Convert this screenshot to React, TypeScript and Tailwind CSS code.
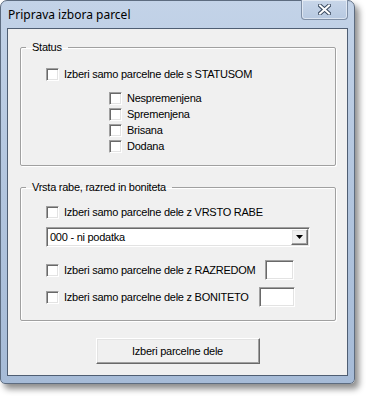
import React from 'react'

const sunken =
  'border border-t-[#a0a0a0] border-l-[#a0a0a0] border-b-white border-r-white shadow-[inset_1px_1px_0_#696969,inset_-1px_-1px_0_#e3e3e3]'
const raised =
  'border border-t-white border-l-white border-b-[#696969] border-r-[#696969] shadow-[inset_-1px_-1px_0_#a0a0a0,inset_1px_1px_0_#e3e3e3]'

function CheckBox() {
  return <div className={`h-[13px] w-[13px] shrink-0 bg-white ${sunken}`} />
}

function CheckRow({ label, className = '' }: { label: string; className?: string }) {
  return (
    <div className={`flex h-[13px] items-center ${className}`}>
      <CheckBox />
      <span className="ml-[5px] whitespace-nowrap leading-[13px]">{label}</span>
    </div>
  )
}

function GroupBox({
  title,
  className = '',
  children,
}: {
  title: string
  className?: string
  children: React.ReactNode
}) {
  return (
    <fieldset
      className={`ml-[12px] w-[316px] rounded-[2px] border border-[#a0a0a0] shadow-[inset_1px_1px_0_white,1px_1px_0_white] ${className}`}
    >
      <legend className="ml-[5px] h-[14px] px-[6px] leading-[14px]">{title}</legend>
      {children}
    </fieldset>
  )
}

function InputRow({ label, labelWidth, boxWidth, className = '' }: {
  label: string
  labelWidth: string
  boxWidth: string
  className?: string
}) {
  return (
    <div className={`flex h-[20px] items-center ${className}`}>
      <CheckBox />
      <span className={`ml-[5px] whitespace-nowrap ${labelWidth}`}>{label}</span>
      <div className={`h-[20px] bg-white ${boxWidth} ${sunken}`} />
    </div>
  )
}

export default function App() {
  return (
    <div
      className="h-[396px] w-[367px] bg-white text-[11px] tracking-[-0.25px] text-black"
      style={{ fontFamily: '"Liberation Sans", Arial, sans-serif' }}
    >
      <div className="flex h-[384px] w-[355px] flex-col rounded-t-[7px] rounded-b-[5px] border border-[#5d6c80] bg-gradient-to-b from-[#c3d3e8] via-[#b2c5de] to-[#a6bbd7] px-[6px] pb-[7px] shadow-[4px_5px_6px_rgba(0,0,0,0.45)]">
        {/* title bar */}
        <div className="flex h-[27px] shrink-0 items-start justify-between">
          <span
            className="ml-[1px] mt-[6px] text-[12px] leading-[16px] tracking-normal text-black"
            style={{ fontFamily: '"Noto Sans", "Open Sans", sans-serif' }}
          >
            Priprava izbora parcel
          </span>
          <div className="-mt-px flex h-[20px] w-[47px] items-center justify-center rounded-b-[4px] border border-t-0 border-[#7f8fa6] bg-gradient-to-b from-[#c8d6e9] to-[#b7c9e1] shadow-[inset_0_0_0_1px_rgba(255,255,255,0.5)]">
            <svg width="13" height="11" viewBox="0 0 13 11">
              <path d="M2 1.5 L11 9.5 M11 1.5 L2 9.5" stroke="#3a4a60" strokeWidth="4" strokeLinecap="square" />
              <path d="M2 1.5 L11 9.5 M11 1.5 L2 9.5" stroke="white" strokeWidth="2" strokeLinecap="square" />
            </svg>
          </div>
        </div>

        {/* client area */}
        <div className="flex flex-1 flex-col border border-[#4f5e73] bg-[#f0f0f0]">
          <GroupBox title="Status" className="mt-[11px]">
            <div className="pl-[25px] pb-[12px]">
              <CheckRow label="Izberi samo parcelne dele s STATUSOM" className="mt-[14px]" />
              <div className="mt-[11px] flex flex-col gap-[3px] pl-[63px]">
                <CheckRow label="Nespremenjena" />
                <CheckRow label="Spremenjena" />
                <CheckRow label="Brisana" />
                <CheckRow label="Dodana" />
              </div>
            </div>
          </GroupBox>

          <GroupBox title="Vrsta rabe, razred in boniteta" className="mt-[14px]">
            <div className="pl-[25px] pb-[13px]">
              <CheckRow label="Izberi samo parcelne dele z VRSTO RABE" className="mt-[12px]" />
              <div className={`mt-[8px] flex h-[20px] w-[264px] items-center bg-white ${sunken}`}>
                <span className="ml-[3px] flex-1">000 - ni podatka</span>
                <div className={`mr-px flex h-[16px] w-[17px] items-center justify-center bg-[#f0f0f0] ${raised}`}>
                  <svg width="7" height="4" viewBox="0 0 7 4">
                    <path d="M0 0 H7 L3.5 4 Z" fill="black" />
                  </svg>
                </div>
              </div>
              <InputRow
                label="Izberi samo parcelne dele z RAZREDOM"
                labelWidth="w-[201px]"
                boxWidth="w-[29px]"
                className="mt-[13px]"
              />
              <InputRow
                label="Izberi samo parcelne dele z BONITETO"
                labelWidth="w-[195px]"
                boxWidth="w-[36px]"
                className="mt-[7px]"
              />
            </div>
          </GroupBox>

          <button
            className={`mx-auto mt-[17px] h-[26px] w-[164px] bg-[#f0f0f0] text-[11px] ${raised}`}
          >
            Izberi parcelne dele
          </button>
        </div>
      </div>
    </div>
  )
}
